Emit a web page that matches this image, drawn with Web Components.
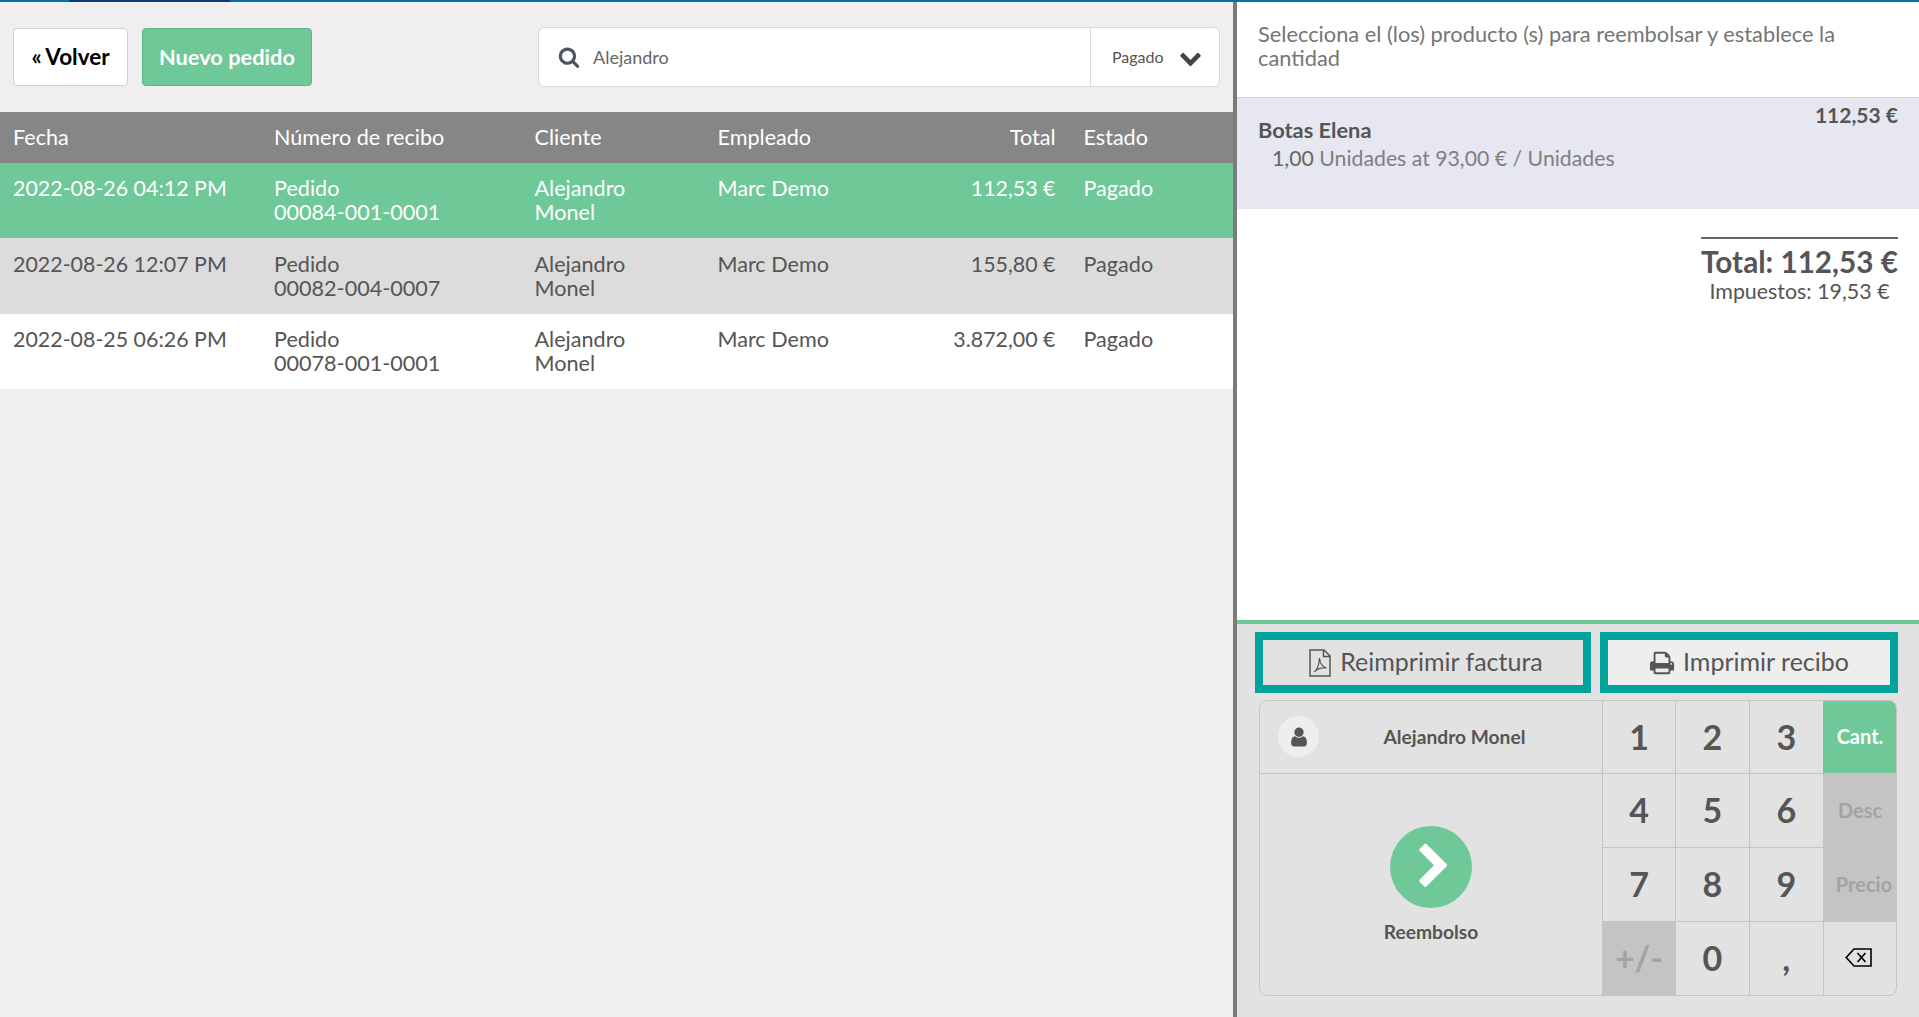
<!DOCTYPE html>
<html lang="es">
<head>
<meta charset="utf-8">
<title>Pedidos</title>
<style>
    html, body { margin: 0; height: 100%; }
    body { font-family: Lato, "Open Sans", sans-serif; color: #555; overflow: hidden; }
</style>
</head>
<body>
<pos-screen>
    <order-list slot="left">
        <order-row head date="Fecha" receipt="Número de recibo" client="Cliente" staff="Empleado" total="Total" status="Estado"></order-row>
        <order-row selected date="2022-08-26 04:12 PM" receipt="Pedido|00084-001-0001" client="Alejandro|Monel" staff="Marc Demo" total="112,53 €" status="Pagado"></order-row>
        <order-row alt date="2022-08-26 12:07 PM" receipt="Pedido|00082-004-0007" client="Alejandro|Monel" staff="Marc Demo" total="155,80 €" status="Pagado"></order-row>
        <order-row date="2022-08-25 06:26 PM" receipt="Pedido|00078-001-0001" client="Alejandro|Monel" staff="Marc Demo" total="3.872,00 €" status="Pagado"></order-row>
    </order-list>
    <refund-receipt slot="right"></refund-receipt>
    <refund-pad slot="right"></refund-pad>
</pos-screen>

<script>
const ICONS = {
    search: 'M1216 832q0-185-131.5-316.5t-316.5-131.5-316.5 131.5-131.5 316.5 131.5 316.5 316.5 131.5 316.5-131.5 131.5-316.5zm512 832q0 52-38 90t-90 38q-54 0-90-38l-343-342q-179 124-399 124-143 0-273.5-55.5t-225-150-150-225-55.5-273.5 55.5-273.5 150-225 225-150 273.5-55.5 273.5 55.5 225 150 150 225 55.5 273.5q0 220-124 399l343 343q37 37 37 90z',
    down: 'M1683 808l-742 741q-19 19-45 19t-45-19l-742-741q-19-19-19-45.5t19-45.5l166-165q19-19 45-19t45 19l531 531 531-531q19-19 45-19t45 19l166 165q19 19 19 45.5t-19 45.5z',
    right: 'M1363 877l-742 742q-19 19-45 19t-45-19l-166-166q-19-19-19-45t19-45l531-531-531-531q-19-19-19-45t19-45l166-166q19-19 45-19t45 19l742 742q19 19 19 45t-19 45z',
    user: 'M1536 1399q0 109-62.5 187t-150.5 78h-854q-88 0-150.5-78t-62.5-187q0-85 8.5-160.5t31.5-152 58.5-131 94-89 134.5-34.5q131 128 313 128t313-128q76 0 134.5 34.5t94 89 58.5 131 31.5 152 8.5 160.5zm-256-887q0 159-112.5 271.5t-271.5 112.5-271.5-112.5-112.5-271.5 112.5-271.5 271.5-112.5 271.5 112.5 112.5 271.5z',
    print: 'M448 1536h896v-256h-896v256zm0-640h896v-384h-160q-40 0-68-28t-28-68v-160h-640v640zm1152 64q0-26-19-45t-45-19-45 19-19 45 19 45 45 19 45-19 19-45zm128 0v416q0 13-9.5 22.5t-22.5 9.5h-224v160q0 40-28 68t-68 28h-960q-40 0-68-28t-28-68v-160h-224q-13 0-22.5-9.5t-9.5-22.5v-416q0-79 56.5-135.5t135.5-56.5h64v-544q0-40 28-68t68-28h672q40 0 88 20t76 48l152 152q28 28 48 76t20 88v256h64q79 0 135.5 56.5t56.5 135.5z'
};
const icon = (name, size) => `<svg viewBox="0 0 1792 1792" width="${size}" height="${size}" fill="currentColor"><path d="${ICONS[name]}"/></svg>`;

class PosScreen extends HTMLElement {
    constructor() {
        super();
        this.attachShadow({ mode: 'open' });
        this.shadowRoot.innerHTML = `
            <style>
                :host { display: flex; flex-direction: column; height: 1017px; }
                #bar { flex: none; height: 2px; background: linear-gradient(90deg, #0a6fa8 69px, #0b3c73 69px, #0b3c73 230px, #0a6fa8 230px); }
                #main { flex: 1; display: flex; min-height: 0; }
                #left { flex: none; width: 1233px; background: #f0eeee; }
                #right { flex: 1; display: flex; flex-direction: column; border-left: 4px solid #7b7b7b; background: #fff; }
            </style>
            <div id="bar"></div>
            <div id="main">
                <div id="left"><order-toolbar></order-toolbar><slot name="left"></slot></div>
                <div id="right"><slot name="right"></slot></div>
            </div>`;
    }
}

class OrderToolbar extends HTMLElement {
    constructor() {
        super();
        this.attachShadow({ mode: 'open' });
        this.shadowRoot.innerHTML = `
            <style>
                :host { display: flex; align-items: center; height: 110px; padding: 0 13px; box-sizing: border-box; }
                button { font: 700 21.800px/26px Lato, sans-serif; height: 58px; border-radius: 4px; padding: 0; }
                #back { width: 115px; background: #fff; border: 1px solid #d0d0d0; color: #000; font-size: 22.500px; word-spacing: -1px; }
                #new { width: 170px; margin-left: 14px; background: #6ec898; border: 1px solid #5fb587; color: #fff; }
                #search { margin-left: auto; width: 682px; height: 60px; box-sizing: border-box; display: flex; align-items: center;
                    background: #fff; border: 1px solid #d8d8d8; border-radius: 6px; }
                #q { flex: 1; display: flex; align-items: center; gap: 13px; padding-left: 19px; font-size: 18px; color: #666; }
                #q svg { color: #4b5563; }
                #filter { flex: none; width: 129px; height: 100%; box-sizing: border-box; border-left: 1px solid #d8d8d8; display: flex; align-items: center;
                    padding-left: 21px; gap: 15px; font-size: 16px; line-height: 18px; color: #555; }
                #filter svg { color: #444; }
            </style>
            <button id="back">« Volver</button>
            <button id="new">Nuevo pedido</button>
            <div id="search">
                <div id="q">${icon('search', 22)}<span>Alejandro</span></div>
                <div id="filter"><span>Pagado</span>${icon('down', 23)}</div>
            </div>`;
    }
}

class OrderList extends HTMLElement {
    constructor() {
        super();
        this.attachShadow({ mode: 'open' });
        this.shadowRoot.innerHTML = `<style>:host { display: block; }</style><slot></slot>`;
    }
}

class OrderRow extends HTMLElement {
    constructor() {
        super();
        this.attachShadow({ mode: 'open' });
    }
    connectedCallback() {
        const a = n => this.getAttribute(n).replace('|', '<br>');
        this.shadowRoot.innerHTML = `
            <style>
                :host { display: grid; grid-template-columns: 261px 260.500px 183px 184px 182px 162px; font-size: 21.600px; line-height: 24px;
                    height: 75.300px; box-sizing: border-box; padding-top: 13.400px; background: #fff; color: #555; }
                :host([alt]) { background: #dcdcdc; }
                :host([selected]) { background: #6ec898; color: #fff; }
                :host([head]) { background: #868686; color: #fff; height: 51px; padding-top: 13px; }
                div { padding-left: 13px; white-space: nowrap; }
                #date { font-size: 21.400px; }
                #total { text-align: right; padding: 0 15px 0 0; font-size: 21.400px; }
                :host([head]) #date, :host([head]) #total { font-size: inherit; }
            </style>
            <div id="date">${a('date')}</div>
            <div>${a('receipt')}</div>
            <div>${a('client')}</div>
            <div>${a('staff')}</div>
            <div id="total">${a('total')}</div>
            <div>${a('status')}</div>`;
    }
}

class RefundReceipt extends HTMLElement {
    constructor() {
        super();
        this.attachShadow({ mode: 'open' });
        this.shadowRoot.innerHTML = `
            <style>
                :host { display: block; flex: 1; color: #555; }
                #hint { height: 96px; box-sizing: border-box; padding: 20px 21px 0; font-size: 21.800px; line-height: 24px; color: #757575; border-bottom: 1px solid #d4d4d4; }
                #item { height: 111px; box-sizing: border-box; background: #e6e7f0; padding: 20px 21px 0; position: relative; }
                #name { font-size: 21.800px; font-weight: 700; line-height: 24px; }
                #price { position: absolute; right: 21px; top: 5px; font-size: 21px; font-weight: 700; line-height: 24px; }
                #qty { font-size: 21.250px; line-height: 24px; color: #808080; padding: 4px 0 0 14px; }
                #qty b { color: #666; font-weight: 400; }
                #sum { width: 197px; margin: 28px 21px 0 auto; border-top: 2px solid #666; text-align: center; }
                #total { font-size: 29.700px; font-weight: 700; line-height: 36px; white-space: nowrap; margin: 5px -4px 0; }
                #tax { font-size: 21.400px; line-height: 22px; white-space: nowrap; margin: 0 -4px; }
            </style>
            <div id="hint">Selecciona el (los) producto (s) para reembolsar y establece la cantidad</div>
            <div id="item">
                <div id="name">Botas Elena</div>
                <div id="price">112,53 €</div>
                <div id="qty"><b>1,00</b> Unidades at 93,00 € / Unidades</div>
            </div>
            <div id="sum">
                <div id="total">Total: 112,53 €</div>
                <div id="tax">Impuestos: 19,53 €</div>
            </div>`;
    }
}

class NumKey extends HTMLElement {
    constructor() {
        super();
        this.attachShadow({ mode: 'open' });
        this.shadowRoot.innerHTML = `
            <style>
                :host { display: flex; align-items: center; justify-content: center; box-sizing: border-box; padding-bottom: 2px;
                    font-size: 34px; font-weight: 700; color: #555; border-left: 1px solid #c4c4c4; border-top: 1px solid #c4c4c4; }
                :host([mode]) { font-size: 20px; }
                :host([active]) { background: #6ec898; color: #fff; border-color: #6ec898; }
                :host([off]) { background: #c4c4c4; color: #a3a3a3; }
                :host([shift]) { padding-left: 8px; }
                :host([erase]) { padding-right: 4px; }
            </style>
            <slot></slot>`;
    }
}

class RefundPad extends HTMLElement {
    constructor() {
        super();
        this.attachShadow({ mode: 'open' });
        this.shadowRoot.innerHTML = `
            <style>
                :host { display: block; flex: none; height: 397px; box-sizing: border-box; background: #e2e2e2; border-top: 4px solid #6ec898; padding: 8px 21px 0 18px; }
                #actions { display: flex; gap: 9px; height: 61px; }
                .act { box-sizing: border-box; border: 8px solid #02a199; font: 400 25px/30px Lato, sans-serif; color: #555; background: #e2e2e2;
                    display: flex; align-items: center; justify-content: center; gap: 8px; padding-bottom: 3px; }
                .act svg { margin-top: 3px; }
                #invoice { width: 336px; padding-left: 5px; }
                #print { width: 298px; background: #eee; }
                #grid { margin: 7px 0 0 4px; width: 638px; height: 296px; box-sizing: border-box; border: 1px solid #c4c4c4; border-radius: 8px; overflow: hidden;
                    display: grid; grid-template-columns: 342px 73px 73.500px 74.500px 1fr; grid-template-rows: 72px 74px 74px 1fr; }
                num-key:nth-of-type(-n+3), #cant { border-top: 0; }
                #customer { display: flex; align-items: center; font-size: 19.200px; font-weight: 700; padding: 0 0 1px 18px; }
                #avatar { flex: none; width: 41px; height: 41px; border-radius: 50%; background: #eee; color: #555; display: flex; align-items: center; justify-content: center; }
                #customer span { flex: 1; text-align: center; padding-right: 12px; }
                #refund { grid-row: 2 / 5; border-top: 1px solid #c4c4c4; display: flex; flex-direction: column; align-items: center; padding-top: 52px; box-sizing: border-box; font-size: 19.200px; font-weight: 700; }
                #go { width: 82px; height: 82px; border-radius: 50%; background: #6ec898; color: #fff; display: flex; align-items: center; justify-content: center; margin-bottom: 12px; }
                #go svg { margin-left: 5px; }
            </style>
            <div id="actions">
                <div class="act" id="invoice">
                    <svg width="24" height="28" viewBox="0 0 24 28" fill="none" stroke="#555" stroke-width="1.5">
                        <path d="M2 1h14l6 6v20H2zM15.500 1v6.500H22"/>
                        <path d="M6 23c3-2 5-7 5.500-14 .5 5.500 3 9 7 10-4-.5-9 .5-12.500 4z" stroke-width="1.2"/>
                    </svg>
                    <span>Reimprimir factura</span>
                </div>
                <div class="act" id="print">${icon('print', 26)}<span>Imprimir recibo</span></div>
            </div>
            <div id="grid">
                <div id="customer"><div id="avatar">${icon('user', 22)}</div><span>Alejandro Monel</span></div>
                <num-key>1</num-key><num-key>2</num-key><num-key>3</num-key><num-key id="cant" mode active>Cant.</num-key>
                <div id="refund"><div id="go">${icon('right', 48)}</div><div>Reembolso</div></div>
                <num-key>4</num-key><num-key>5</num-key><num-key>6</num-key><num-key mode off>Desc</num-key>
                <num-key>7</num-key><num-key>8</num-key><num-key>9</num-key><num-key mode off shift>Precio</num-key>
                <num-key off>+/-</num-key><num-key>0</num-key><num-key>,</num-key>
                <num-key erase>
                    <svg width="27" height="19" viewBox="0 0 27 19" fill="none" stroke="#000" stroke-width="1.600"><path d="M9 1h17v17H9L1.200 9.500zM12.500 5l8 9M20.500 5l-8 9"/></svg>
                </num-key>
            </div>`;
    }
}

customElements.define('pos-screen', PosScreen);
customElements.define('order-toolbar', OrderToolbar);
customElements.define('order-list', OrderList);
customElements.define('order-row', OrderRow);
customElements.define('refund-receipt', RefundReceipt);
customElements.define('num-key', NumKey);
customElements.define('refund-pad', RefundPad);
</script>
</body>
</html>
